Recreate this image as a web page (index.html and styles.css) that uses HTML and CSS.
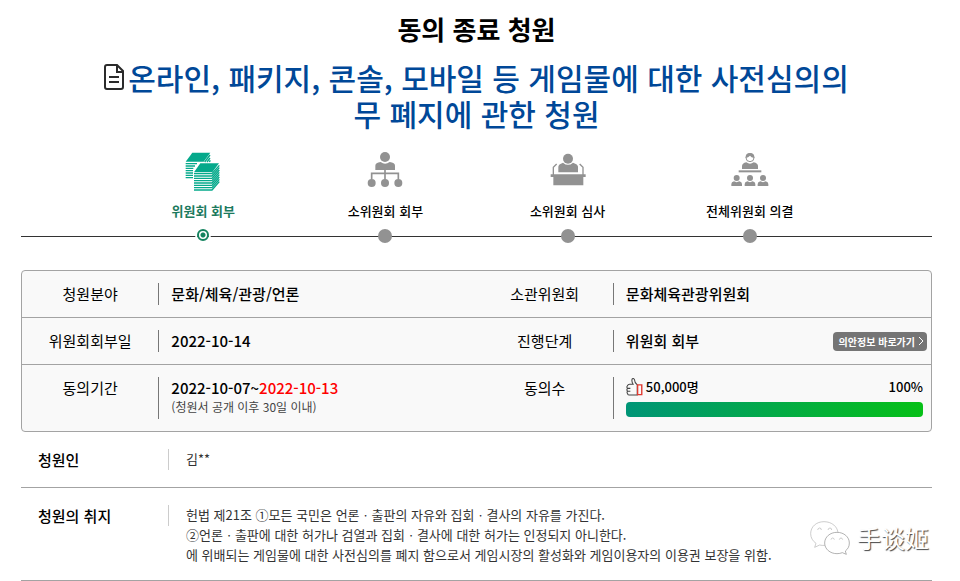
FILE: index.html
```html
<!DOCTYPE html>
<html lang="ko">
<head>
    <meta charset="UTF-8">
    <meta name="viewport" content="width=device-width, initial-scale=1.0">
    <title>동의 종료 청원</title>
    <link rel="stylesheet" href="styles.css">
</head>
<body>
    <main>
        <h1>동의 종료 청원</h1>
        <h2 class="petition-title">
            <svg class="doc-icon" viewBox="0 0 20 26" fill="none" stroke="#2b2b2b" stroke-width="2" aria-hidden="true">
                <path d="M3 1h10l6 6v16a2 2 0 0 1-2 2H3A2 2 0 0 1 1 23V3A2 2 0 0 1 3 1z"/>
                <path d="M13 2v6h6M5 13h10M5 18h10"/>
            </svg>온라인, 패키지, 콘솔, 모바일 등 게임물에 대한 사전심의의무 폐지에 관한 청원
        </h2>

        <ol class="steps">
            <li class="step active">
                <svg class="step-icon" viewBox="70 33 120 120" aria-hidden="true">
                    <path fill="#04a98b" d="M98 38h54l-20 27h-54z"/>
                    <path stroke="#04a98b" stroke-width="4" fill="none" d="M78 71h34M78 78h28M78 85h23M78 92h22M78 99h22M78 106h22M78 113h22M135 66l16-21M142 66l9-12M149 66l3-5"/>
                    <path fill="#04a98b" d="M122 70h56l-20 27h-55z"/>
                    <path stroke="#04a98b" stroke-width="4" fill="none" d="M103 101h54l22-25M103 108h54l22-25M103 115h54l22-25M103 122h54l22-25M103 129h54l22-25M103 136h54l22-25M103 143h54l22-25M103 150h54l22-25"/>
                </svg>
                <span class="step-name">위원회 회부</span>
                <span class="dot"></span>
            </li>
            <li class="step">
                <svg class="step-icon" viewBox="75 33 120 120" fill="#929292" aria-hidden="true">
                    <circle cx="135" cy="51" r="15"/>
                    <path d="M106 90V77q0-9 16-11q13 11 27 0q16 2 16 11v13z"/>
                    <path d="M95 117v-17h80v17M135 88v30" fill="none" stroke="#929292" stroke-width="5"/>
                    <circle cx="95" cy="129" r="12"/>
                    <circle cx="135" cy="129" r="12"/>
                    <circle cx="175" cy="129" r="12"/>
                </svg>
                <span class="step-name">소위원회 회부</span>
                <span class="dot"></span>
            </li>
            <li class="step">
                <svg class="step-icon" viewBox="82 33 120 120" fill="#929292" aria-hidden="true">
                    <circle cx="142" cy="56" r="15"/>
                    <path d="M113 97V80q0-7 14-12q15 13 30 0q15 5 15 12v17z"/>
                    <path d="M98 105V82l10-10M187 105V82l-10-10" fill="none" stroke="#929292" stroke-width="4"/>
                    <path d="M90 103h105v8h-7v25H98v-25h-8z"/>
                </svg>
                <span class="step-name">소위원회 심사</span>
                <span class="dot"></span>
            </li>
            <li class="step">
                <svg class="step-icon" viewBox="88 33 120 120" fill="#929292" aria-hidden="true">
                    <path d="M124 87V78q0-8 13-11q11 8 22 0q13 3 13 11v9z"/>
                    <circle cx="148" cy="53" r="12" fill="#fff" stroke="#929292" stroke-width="3"/>
                    <path d="M135 54q-1-15 13-15t13 15q-10-1-13-7q-5 6-13 7z"/>
                    <path d="M114 91h68v6h-68z"/>
                    <circle cx="108" cy="114" r="9"/>
                    <circle cx="148" cy="114" r="9"/>
                    <circle cx="187" cy="114" r="9"/>
                    <path d="M92 138v-6q0-6 8-8q8 5 16 0q8 2 8 8v6zM132 138v-6q0-6 8-8q8 5 16 0q8 2 8 8v6zM171 138v-6q0-6 8-8q8 5 16 0q8 2 8 8v6z"/>
                </svg>
                <span class="step-name">전체위원회 의결</span>
                <span class="dot"></span>
            </li>
        </ol>

        <div class="info-box">
            <table class="info-table">
                <tr>
                    <th scope="row">청원분야</th>
                    <td><div class="cell">문화/체육/관광/언론</div></td>
                    <th scope="row">소관위원회</th>
                    <td><div class="cell">문화체육관광위원회</div></td>
                </tr>
                <tr>
                    <th scope="row">위원회회부일</th>
                    <td><div class="cell">2022-10-14</div></td>
                    <th scope="row">진행단계</th>
                    <td>
                        <div class="cell stage">
                            <span>위원회 회부</span>
                            <a class="bill-link" href="#">의안정보 바로가기
                                <svg viewBox="0 0 6 10" width="6" height="10" fill="none" stroke="#fff" aria-hidden="true"><path d="M1 1l4 4-4 4"/></svg>
                            </a>
                        </div>
                    </td>
                </tr>
                <tr>
                    <th scope="row">동의기간</th>
                    <td>
                        <div class="cell tall">
                            <div>2022-10-07~<span class="end-date">2022-10-13</span></div>
                            <div class="note">(청원서 공개 이후 30일 이내)</div>
                        </div>
                    </td>
                    <th scope="row">동의수</th>
                    <td>
                        <div class="cell tall agree">
                            <div class="agree-row">
                                <svg class="thumb-icon" viewBox="0 0 48 52" fill="none" stroke="#444" stroke-width="3" aria-hidden="true">
                                    <path d="M32 20v29H8q-4 0-4-4q-3-3 0-7q-4-4 0-8q-4-4 0-8q1-4 6-4h10q-5-8-3-15q4-4 7 2q0 8 8 15zM4 30h8M4 38h8"/>
                                    <path stroke="#e03a30" stroke-width="4" d="M33 20h12v28H33z"/>
                                </svg>
                                <span>50,000명</span>
                                <span class="percent">100%</span>
                            </div>
                            <div class="bar"><div class="bar-fill" style="width: 100%"></div></div>
                        </div>
                    </td>
                </tr>
            </table>
        </div>

        <dl class="detail">
            <div class="detail-row">
                <dt>청원인</dt>
                <dd>김**</dd>
            </div>
            <div class="detail-row">
                <dt>청원의 취지</dt>
                <dd>헌법 제21조 ①모든 국민은 언론ㆍ출판의 자유와 집회ㆍ결사의 자유를 가진다.<br>
                    ②언론ㆍ출판에 대한 허가나 검열과 집회ㆍ결사에 대한 허가는 인정되지 아니한다.<br>
                    에 위배되는 게임물에 대한 사전심의를 폐지 함으로서 게임시장의 활성화와 게임이용자의 이용권 보장을 위함.</dd>
            </div>
        </dl>

        <div class="watermark" lang="zh-CN">
            <svg viewBox="0 0 120 102" width="40" height="34" fill="#fff" stroke="#b4b4b4" stroke-width="2" aria-hidden="true">
                <path d="M42 2C19 2 2 17 2 38c0 12 6 22 16 29l-4 12 15-7c5 1 10 2 15 1C70 73 84 57 84 38 84 17 65 2 42 2z"/>
                <path stroke="#8c8c8c" d="M81 34c-21 0-37 14-37 32s16 32 37 32c6 0 11-1 16-3l12 5-3-10c8-6 12-14 12-24 0-18-16-32-37-32z"/>
                <path fill="none" d="M23 27q1-6 6-6t5 6M54 27q1-6 6-6t5 6M63 56q1-5 5-5t5 5M88 56q1-5 5-5t5 5"/>
            </svg>
            <span>手谈姬</span>
        </div>
    </main>
</body>
</html>
```
FILE: styles.css
```css
* {
    box-sizing: border-box;
}

body {
    margin: 0;
    font-family: 'Noto Sans CJK KR', 'Noto Sans', sans-serif;
    background-color: #fff;
    color: #000;
}

main {
    position: relative;
    padding: 9px 28px 0 21px;
}

h1 {
    margin: 0;
    font-size: 26px;
    line-height: 40px;
    font-weight: 700;
    text-align: center;
}

.petition-title {
    max-width: 760px;
    margin: 10px auto 0;
    font-size: 30px;
    line-height: 36px;
    font-weight: 500;
    text-align: center;
    color: #004898;
}

.doc-icon {
    width: 20px;
    height: 26px;
    margin-right: 4px;
}

.steps {
    position: relative;
    display: flex;
    margin: 20px 0 0;
    padding: 0 10%;
    list-style: none;
}

/* line running behind the dots */
.steps::before {
    content: "";
    position: absolute;
    left: 0;
    right: 0;
    bottom: 6px;
    height: 1px;
    background-color: #333;
}

.step {
    position: relative;
    flex: 1;
    display: flex;
    flex-direction: column;
    align-items: center;
}

.step-icon {
    width: 40px;
    height: 40px;
}

.step-name {
    margin: 10px 0 8px;
    font-size: 13px;
    line-height: 20px;
    font-weight: 500;
}

.active .step-name {
    color: #1c7a5e;
    font-weight: 700;
}

.dot {
    width: 14px;
    height: 14px;
    border-radius: 50%;
    background-color: #929292;
}

.active .dot {
    width: 12px;
    height: 12px;
    border: 2px solid #14835f;
    background: radial-gradient(circle, #14835f 2px, #fff 3px);
    box-shadow: 0 0 0 2px #fff;
}

.info-box {
    margin-top: 27px;
    border: 1px solid #a3a3a3;
    border-radius: 4px;
    background-color: #f9f9f9;
}

.info-table {
    width: 100%;
    table-layout: fixed;
    border-collapse: collapse;
    font-size: 15px;
    line-height: 22px;
}

.info-table tr + tr {
    border-top: 1px solid #a3a3a3;
}

.info-table th {
    width: 15%;
    padding: 12px 0;
    font-weight: 400;
    vertical-align: top;
}

.info-table td {
    padding: 12px 0;
    font-weight: 500;
    vertical-align: top;
}

.cell {
    padding: 0 4px 0 12px;
    border-left: 1px solid #777;
}

.tall {
    height: 42px;
}

.stage {
    display: flex;
    justify-content: space-between;
    align-items: center;
}

.bill-link {
    display: flex;
    align-items: center;
    gap: 3px;
    padding: 0 3px 0 6px;
    border-radius: 4px;
    background-color: #757575;
    color: #fff;
    font-size: 10px;
    line-height: 19px;
    font-weight: 700;
    text-decoration: none;
}

.end-date {
    color: #f00;
}

.note {
    font-size: 12px;
    line-height: 16px;
    font-weight: 400;
    color: #444;
}

.agree {
    padding-right: 8px;
}

.agree-row {
    display: flex;
    align-items: center;
    gap: 3px;
    font-size: 13px;
    line-height: 20px;
}

.thumb-icon {
    width: 17px;
    height: 18px;
}

.percent {
    margin-left: auto;
}

.bar {
    height: 15px;
    margin-top: 5px;
    border-radius: 4px;
    background-color: #ddd;
    overflow: hidden;
}

.bar-fill {
    height: 100%;
    background: linear-gradient(to right, #009577, #06c017);
}

.detail {
    margin: 0;
}

.detail-row {
    display: flex;
    min-height: 56px;
    padding: 17px 0 15px;
    border-bottom: 1px solid #a3a3a3;
}

.detail dt {
    flex: 0 0 148px;
    height: 21px;
    padding-left: 17px;
    border-right: 1px solid #ccc;
    font-size: 15px;
    line-height: 22px;
    font-weight: 500;
}

.detail dd {
    margin: 0;
    padding-left: 17px;
    font-size: 13px;
    line-height: 20px;
    color: #333;
}

.watermark {
    position: absolute;
    right: 31px;
    bottom: 25px;
    display: flex;
    align-items: center;
    gap: 7px;
    font-family: 'Noto Sans CJK SC', sans-serif;
    font-size: 24px;
    line-height: 36px;
    color: #fff;
    text-shadow: 1px 1px 1px #444;
}
```
